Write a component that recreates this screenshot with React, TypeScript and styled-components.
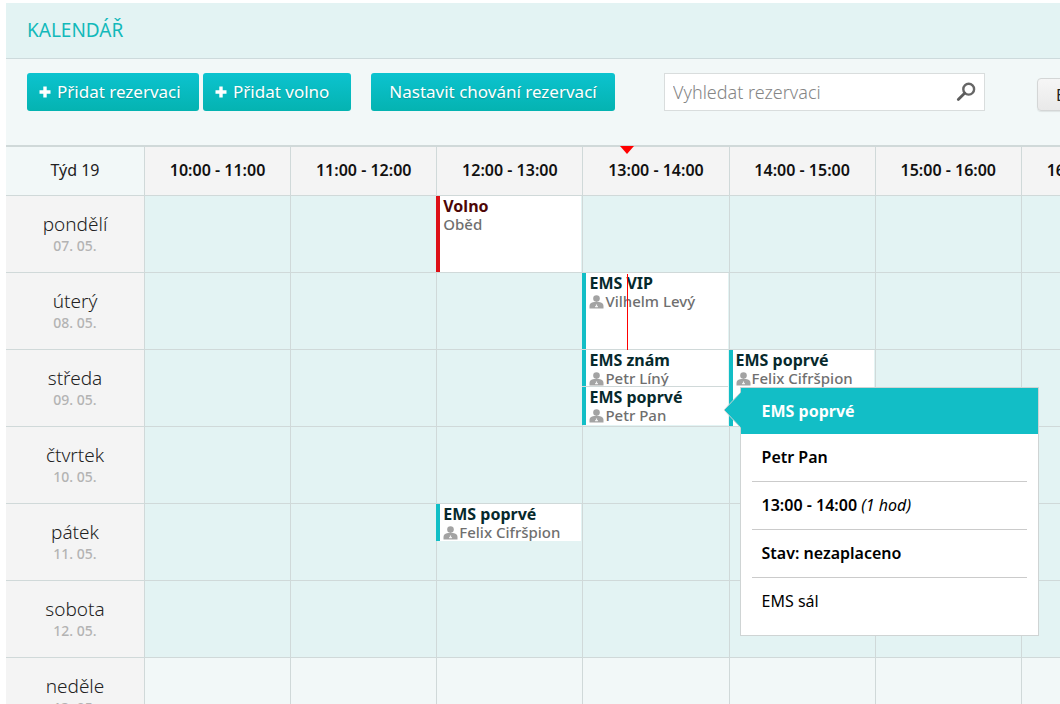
import React from "react";
import styled, { createGlobalStyle, css } from "styled-components";

const line = "#d0d9d9";
const teal = "#12bec6";

const GlobalStyle = createGlobalStyle`
  * { box-sizing: border-box; }
  html { scrollbar-width: none; }
  body {
    margin: 0;
    background: #fff;
    color: #222;
    font-family: "Noto Sans", "Open Sans", sans-serif;
    font-size: 16px;
  }
  button, input { font: inherit; }
`;

const Page = styled.main`
  margin: 3px 0 0 6px;
  background: #f2f8f8;
  overflow: hidden;
`;

const TitleBar = styled.header`
  display: flex;
  align-items: center;
  height: 56px;
  padding: 0 21px 2px;
  background: #e3f3f3;
  border-bottom: 1px solid #cddadc;
`;

const Title = styled.h1`
  margin: 0;
  color: #12b9ba;
  font-size: 19px;
  font-weight: 400;
  line-height: 24px;
`;

const Toolbar = styled.div`
  display: flex;
  align-items: flex-start;
  height: 86px;
  padding: 14px 21px;
  white-space: nowrap;
`;

const Button = styled.button<{ $width: number; $gap?: number; $icon?: boolean }>`
  display: flex;
  flex: none;
  align-items: center;
  justify-content: ${(p) => (p.$icon ? "flex-start" : "center")};
  gap: 6px;
  min-width: ${(p) => p.$width}px;
  height: 38px;
  margin: 0 ${(p) => p.$gap ?? 4}px 0 0;
  padding: 0 12px;
  border: 0;
  border-radius: 3px;
  background: linear-gradient(#0cc3cf, #04b3b1);
  color: #fff;
  font-size: 17px;
  line-height: 24px;
  text-shadow: 0 1px 1px rgba(0, 80, 80, 0.3);
`;

const GreyButton = styled.button`
  flex: none;
  height: 33px;
  margin: 5px 0 0 52px;
  padding: 0 18px;
  border: 1px solid #d4d6d6;
  border-radius: 4px;
  background: linear-gradient(#f6f6f6, #e9e9e9);
  color: #222;
  font-size: 16px;
  line-height: 20px;
  box-shadow: 0 1px 1px rgba(0, 0, 0, 0.08);
`;

const Search = styled.label`
  display: flex;
  flex: none;
  align-items: center;
  width: 321px;
  height: 38px;
  margin-left: 29px;
  padding: 0 8px;
  border: 1px solid #d9dddd;
  background: #fff;
`;

const SearchInput = styled.input`
  flex: 1;
  min-width: 0;
  padding: 0;
  border: 0;
  outline: 0;
  background: transparent;
  color: #333;
  font-size: 18px;
  font-weight: 300;
  line-height: 24px;
  &::placeholder { color: #858585; opacity: 1; }
`;

const Scroller = styled.div`
  overflow-x: auto;
  scrollbar-width: none;
`;

const Calendar = styled.table`
  width: calc(100% + 107px);
  table-layout: fixed;
  border-collapse: separate;
  border-spacing: 0;
`;

const HourHead = styled.th`
  position: relative;
  height: 51px;
  padding: 0 0 2px;
  border-top: 2px solid ${line};
  border-left: 1px solid ${line};
  border-bottom: 1px solid ${line};
  background: #f4f4f4;
  color: #111;
  font-size: 16px;
  font-weight: 600;
  line-height: 20px;
`;

const WeekHead = styled.th`
  width: 138px;
  padding: 0 0 2px;
  border-top: 2px solid ${line};
  border-bottom: 1px solid ${line};
  background: #f2f8f8;
  color: #222;
  font-size: 16px;
  font-weight: 400;
  line-height: 20px;
`;

const DayHead = styled.th`
  height: 77px;
  padding: 0;
  border-bottom: 1px solid ${line};
  background: #f4f4f4;
`;

const DayName = styled.div`
  color: #222;
  font-size: 19px;
  font-weight: 300;
  line-height: 24px;
`;

const DayDate = styled.div`
  color: #b3b3b3;
  font-size: 14px;
  font-weight: 500;
  line-height: 20px;
`;

const Slot = styled.td<{ $closed?: boolean }>`
  position: relative;
  height: 77px;
  padding: 0;
  border-left: 1px solid ${line};
  border-bottom: 1px solid ${line};
  background: ${(p) => (p.$closed ? "#f2f8f8" : "#e3f3f3")};
  vertical-align: top;
`;

const EventBox = styled.div<{ $half?: boolean; $off?: boolean }>`
  position: relative;
  height: ${(p) => (p.$half ? 37 : 76)}px;
  margin: 0 1px 0 -1px;
  padding-left: 3px;
  border-left: 4px solid ${(p) => (p.$off ? "#dd1016" : teal)};
  background: #fff;
  white-space: nowrap;

  & + & {
    height: 38px;
    box-shadow: 0 -1px 0 ${line};
  }

  ${(p) =>
    p.$off
      ? css`color: #4d0606;`
      : css`color: #06292c;`}
`;

const EventTitle = styled.div`
  font-size: 16px;
  font-weight: 700;
  line-height: 20px;
`;

const EventPerson = styled.div`
  display: flex;
  align-items: center;
  gap: 1px;
  color: #6f6f6f;
  font-size: 15px;
  font-weight: 500;
  line-height: 17px;
`;

const NowMarker = styled.svg`
  position: absolute;
  top: -1px;
  margin-left: -7px;
`;

const NowLine = styled.div`
  position: absolute;
  top: 1px;
  bottom: -1px;
  border-left: 1px solid #f00;
`;

const Popover = styled.aside`
  position: absolute;
  z-index: 2;
  top: 0;
  left: calc(100% + 12px);
  width: 299px;
  border: 1px solid #cfd4d4;
  background: #fff;
  color: #000;
  font-size: 16px;
  line-height: 23px;
`;

const PopoverTitle = styled.h2`
  margin: 0;
  padding: 12px 21px;
  background: ${teal};
  color: #fff;
  font-size: 16px;
  font-weight: 700;
  line-height: 22px;
`;

const PopoverArrow = styled.svg`
  position: absolute;
  top: 4px;
  left: -18px;
`;

const PopoverList = styled.ul`
  margin: 0;
  padding: 0 11px 10px;
  list-style: none;
`;

const PopoverItem = styled.li`
  padding: 12px 10px;
  & + & { border-top: 1px solid #cbcbcb; }
`;

const Strong = styled.strong`
  font-weight: 600;
`;

function Plus() {
  return (
    <svg width="12" height="12" viewBox="0 0 12 12" aria-hidden="true">
      <path d="M4.300 .5h3.400v3.800h3.800v3.400H7.700v3.800H4.300V7.700H.5V4.300h3.800z" fill="#fff" />
    </svg>
  );
}

function Magnifier() {
  return (
    <svg width="20" height="20" viewBox="0 0 20 20" fill="none" aria-hidden="true">
      <circle cx="12.700" cy="7.200" r="5.400" stroke="#666" strokeWidth="2.400" />
      <path d="M8.600 11.300L2.300 17.600" stroke="#5c5c5c" strokeWidth="2.800" strokeLinecap="round" />
    </svg>
  );
}

function Person() {
  return (
    <svg width="15" height="14" viewBox="0 0 15 14" fill="#a3a3a3" aria-hidden="true">
      <circle cx="7.500" cy="3.600" r="3.300" />
      <path d="M.5 13.500V11c0-2.200 1.600-3.700 4.500-4h5c2.900.3 4.500 1.800 4.500 4v2.500z" />
      <path d="M6.900 9.500h1.200v1.500h.8v1.200h-2.800V11h.8z" fill="#f2f2f2" />
    </svg>
  );
}

type Booking = { title: string; person?: string; note?: string; half?: boolean; off?: boolean; details?: boolean };

const hours = [10, 11, 12, 13, 14, 15, 16];

const nowOffset = "30%";

const days: { name: string; date: string; closed?: boolean; now?: number; slots: Record<number, Booking[]> }[] = [
  { name: "pondělí", date: "07. 05.", slots: { 12: [{ title: "Volno", note: "Oběd", off: true }] } },
  { name: "úterý", date: "08. 05.", now: 13, slots: { 13: [{ title: "EMS VIP", person: "Vilhelm Levý" }] } },
  {
    name: "středa",
    date: "09. 05.",
    slots: {
      13: [
        { title: "EMS znám", person: "Petr Líný", half: true },
        { title: "EMS poprvé", person: "Petr Pan", half: true, details: true },
      ],
      14: [{ title: "EMS poprvé", person: "Felix Cifršpion" }],
    },
  },
  { name: "čtvrtek", date: "10. 05.", slots: {} },
  { name: "pátek", date: "11. 05.", slots: { 12: [{ title: "EMS poprvé", person: "Felix Cifršpion", half: true }] } },
  { name: "sobota", date: "12. 05.", slots: {} },
  { name: "neděle", date: "13. 05.", closed: true, slots: {} },
];

function Details() {
  return (
    <Popover>
      <PopoverTitle>EMS poprvé</PopoverTitle>
      <PopoverArrow width="19" height="36" viewBox="0 0 19 36" aria-hidden="true">
        <path d="M19 0h-1L1 18l17 18h1z" fill={teal} />
        <path d="M17.500 .5L1 18l16.500 17.500" fill="none" stroke="#cfd4d4" />
      </PopoverArrow>
      <PopoverList>
        <PopoverItem><Strong>Petr Pan</Strong></PopoverItem>
        <PopoverItem><Strong>13:00 - 14:00</Strong> <em>(1 hod)</em></PopoverItem>
        <PopoverItem><Strong>Stav: nezaplaceno</Strong></PopoverItem>
        <PopoverItem>EMS sál</PopoverItem>
      </PopoverList>
    </Popover>
  );
}

export default function App() {
  return (
    <>
      <GlobalStyle />
      <Page>
        <TitleBar>
          <Title>KALENDÁŘ</Title>
        </TitleBar>
        <Toolbar>
          <Button $width={172} $icon><Plus />Přidat rezervaci</Button>
          <Button $width={148} $gap={20} $icon><Plus />Přidat volno</Button>
          <Button $width={244} $gap={20}>Nastavit chování rezervací</Button>
          <Search>
            <SearchInput type="text" placeholder="Vyhledat rezervaci" aria-label="Vyhledat rezervaci" />
            <Magnifier />
          </Search>
          <GreyButton>Export</GreyButton>
        </Toolbar>
        <Scroller>
          <Calendar>
            <thead>
              <tr>
                <WeekHead scope="col">Týd 19</WeekHead>
                {hours.map((h) => (
                  <HourHead key={h} scope="col">
                    {h}:00 - {h + 1}:00
                    {h === 13 && (
                      <NowMarker width="14" height="8" viewBox="0 0 14 8" style={{ left: nowOffset }}>
                        <path d="M0 0h14L7 8z" fill="#f00" />
                      </NowMarker>
                    )}
                  </HourHead>
                ))}
              </tr>
            </thead>
            <tbody>
              {days.map((d) => (
                <tr key={d.date}>
                  <DayHead scope="row">
                    <DayName>{d.name}</DayName>
                    <DayDate>{d.date}</DayDate>
                  </DayHead>
                  {hours.map((h) => (
                    <Slot key={h} $closed={d.closed}>
                      {(d.slots[h] ?? []).map((b) => (
                        <EventBox key={b.title} $half={b.half} $off={b.off}>
                          <EventTitle>{b.title}</EventTitle>
                          <EventPerson>
                            {b.person && <Person />}
                            {b.person ?? b.note}
                          </EventPerson>
                          {b.details && <Details />}
                        </EventBox>
                      ))}
                      {d.now === h && <NowLine style={{ left: nowOffset }} />}
                    </Slot>
                  ))}
                </tr>
              ))}
            </tbody>
          </Calendar>
        </Scroller>
      </Page>
    </>
  );
}
